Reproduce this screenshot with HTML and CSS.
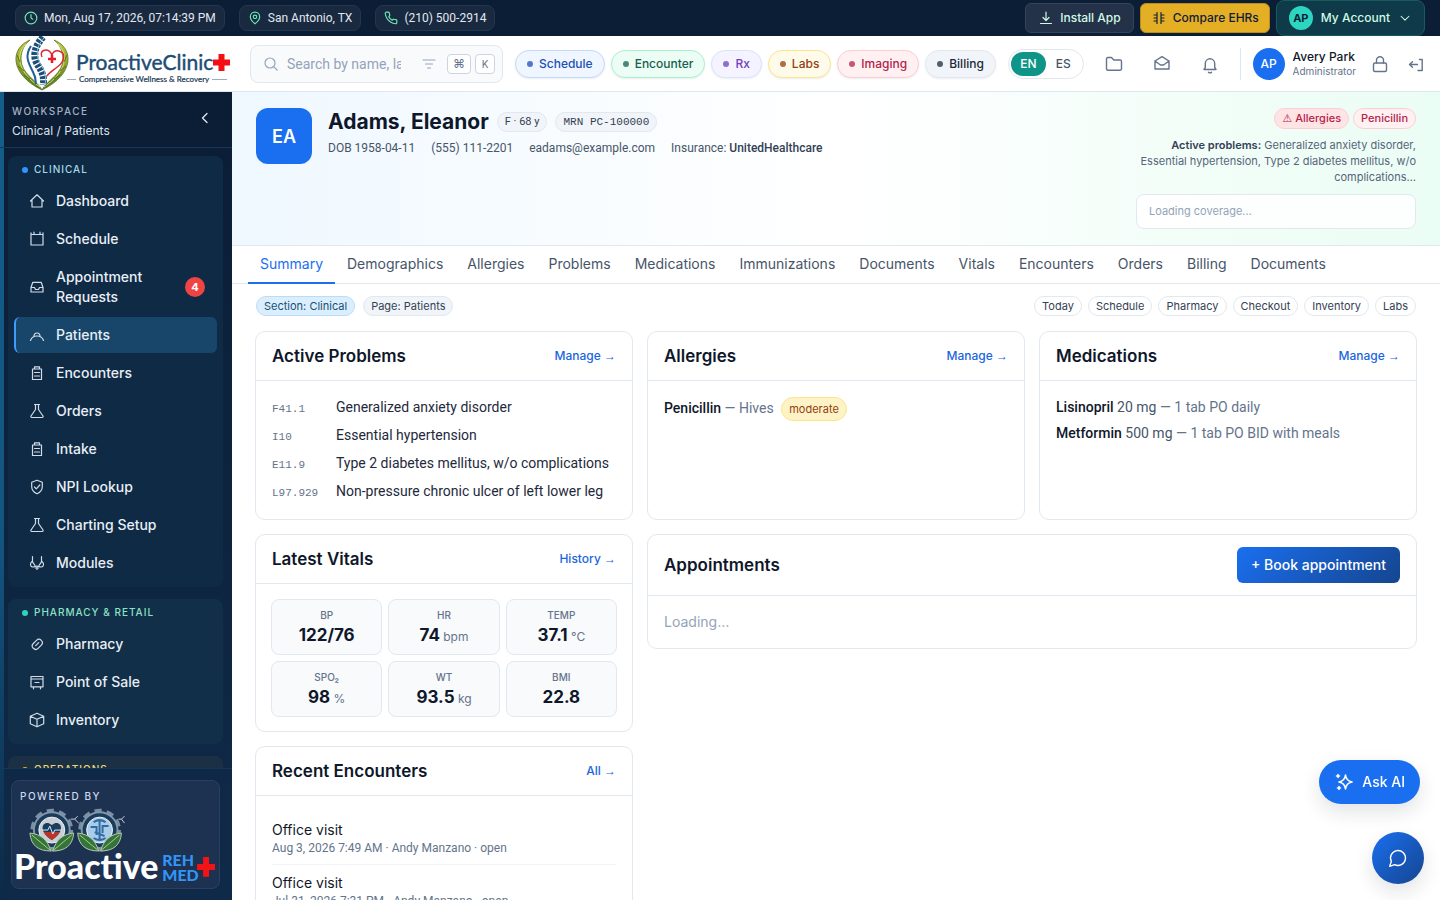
FILE: index.html
```html
<!DOCTYPE html>
<html lang="en">
<head>
    <meta charset="UTF-8">
    <meta name="viewport" content="width=device-width, initial-scale=1.0">
    <title>Adams, Eleanor - ProactiveClinic</title>
    <link rel="stylesheet" href="styles.css">
</head>
<body>
    <!-- Icon sprite -->
    <svg class="sprite" aria-hidden="true">
        <symbol id="i-clock" viewBox="0 0 24 24"><circle cx="12" cy="12" r="10"/><path d="M12 6v6l3 2"/></symbol>
        <symbol id="i-pin" viewBox="0 0 24 24"><path d="M20 10c0 6-8 12-8 12s-8-6-8-12a8 8 0 0 1 16 0z"/><circle cx="12" cy="10" r="3"/></symbol>
        <symbol id="i-phone" viewBox="0 0 24 24"><path d="M22 16.900v3a2 2 0 0 1-2.200 2 19.800 19.800 0 0 1-8.600-3.100 19.500 19.500 0 0 1-6-6A19.800 19.800 0 0 1 2.100 4.200 2 2 0 0 1 4.100 2h3a2 2 0 0 1 2 1.700c.1 1 .4 1.900.7 2.800a2 2 0 0 1-.5 2.100L8.100 9.900a16 16 0 0 0 6 6l1.300-1.300a2 2 0 0 1 2.100-.4c.9.300 1.800.6 2.800.7a2 2 0 0 1 1.700 2z"/></symbol>
        <symbol id="i-download" viewBox="0 0 16 16"><path d="M8 2v8M5 7.500l3 3 3-3M2.500 13.500h11"/></symbol>
        <symbol id="i-compare" viewBox="0 0 16 16"><path d="M6 2.500v11M10 2.500v11M3 5h3M3 8h3M3 11h3M10 5h3M10 8h3M10 11h3"/></symbol>
        <symbol id="i-chev-down" viewBox="0 0 16 16"><path d="M3.500 6l4.500 4.500L12.500 6"/></symbol>
        <symbol id="i-chev-left" viewBox="0 0 16 16"><path d="M10 3.500L5.500 8l4.500 4.500"/></symbol>
        <symbol id="i-search" viewBox="0 0 16 16"><circle cx="7" cy="7" r="5"/><path d="M10.700 10.700L14 14"/></symbol>
        <symbol id="i-filter" viewBox="0 0 16 16"><path d="M2 4h12M4.500 8h7M6.500 12h3"/></symbol>
        <symbol id="i-folder" viewBox="0 0 20 20"><path d="M2.500 5A1.500 1.500 0 0 1 4 3.500h3.500l2.300 2.500H16A1.500 1.500 0 0 1 17.500 7.500v7.200a1.500 1.500 0 0 1-1.500 1.500H4a1.500 1.500 0 0 1-1.500-1.500z"/></symbol>
        <symbol id="i-mail" viewBox="0 0 20 20"><path d="M3 7l7-4.300L17 7v8H3zM3 7l5.500 4h3L17 7"/></symbol>
        <symbol id="i-bell" viewBox="0 0 20 20"><path d="M4 15.500l1.300-2V9.500a4.700 4.700 0 0 1 9.400 0v4l1.300 2zM8.500 18.200c.8.700 2.200.7 3 0"/></symbol>
        <symbol id="i-lock" viewBox="0 0 20 20"><rect x="3.500" y="9" width="13" height="8.500" rx="1.500"/><path d="M6.500 9V6.200a3.500 3.500 0 0 1 7 0V9"/></symbol>
        <symbol id="i-exit" viewBox="0 0 20 20"><path d="M13.500 5.500h2.700v11H12M11.500 10.500H3.500M6.500 7.700l-3 2.800 3 2.800"/></symbol>
        <symbol id="i-home" viewBox="0 0 16 16"><path d="M1.500 8L8 1.800 14.500 8M3 6.800V14h10V6.800"/></symbol>
        <symbol id="i-calendar" viewBox="0 0 16 16"><path d="M2 3.500h12V14H2zM5 1v2.500M11 1v2.500M2 1.800v2M14 1.800v2"/></symbol>
        <symbol id="i-inbox" viewBox="0 0 16 16"><path d="M2 8.500l1.800-5.200h8.400L14 8.500V13H2zM2 8.500h3.500l1 2h3l1-2H14"/></symbol>
        <symbol id="i-patient" viewBox="0 0 16 16"><path d="M1.500 13.500c1-3 3.300-4.500 6.500-4.500s5.500 1.500 6.500 4.500M4.800 9.800C5 7.500 6.200 6 8 6s3 1.500 3.200 3.800"/></symbol>
        <symbol id="i-clipboard" viewBox="0 0 16 16"><path d="M3.500 4h9v10.500h-9zM5.500 4V1.800h5V4M5.500 7.500h5M5.500 11h5"/></symbol>
        <symbol id="i-flask" viewBox="0 0 16 16"><path d="M5.500 1.500h5M6.500 1.500v5L2 13q-.5 1.300.8 1.500h10.400q1.300-.2.800-1.500L9.500 6.500v-5"/></symbol>
        <symbol id="i-shield" viewBox="0 0 16 16"><path d="M8 1.200l5.300 2v4.300c0 3.500-2.200 5.900-5.300 7.300-3.100-1.400-5.300-3.800-5.300-7.300V3.200zM5.500 8l1.800 1.800L10.800 6"/></symbol>
        <symbol id="i-steth" viewBox="0 0 16 16"><path d="M3.500 1.500v5.300L6 10.500M12.500 1.500v5.300L10 10.500"/><path d="M3 6.500C.8 8 .9 11.800 3.800 12c2 .1 2.700-1 4.200-1s2.200 1.100 4.200 1c2.900-.2 3-4 .8-5.500M8 11v3.500M6.500 13h3"/></symbol>
        <symbol id="i-pill" viewBox="0 0 16 16"><path d="M4.300 7.500l3.200-3.200a3.300 3.300 0 0 1 4.800 4.800l-3.200 3.200a3.300 3.300 0 0 1-4.800-4.800zM6.700 9.700l3-3"/></symbol>
        <symbol id="i-pos" viewBox="0 0 16 16"><path d="M2 2.500h12v10.300H2zM2 5h12M6 8.500h4M4.500 12.800v2M11.500 12.800v2"/></symbol>
        <symbol id="i-box" viewBox="0 0 16 16"><path d="M8 1.200l6.700 3v7.600L8 14.800l-6.700-3V4.200zM1.300 4.200L8 7.300l6.700-3.100M8 7.300v7.500"/></symbol>
        <symbol id="i-spark" viewBox="0 0 20 20"><path d="M11.500 3c.5 4.200 2.400 6.200 6.500 7-4.100.8-6 2.800-6.500 7-.5-4.200-2.400-6.200-6.500-7 4.100-.8 6-2.800 6.500-7zM4 2.500v3M2.500 4h3M5 14.500v3M3.500 16h3"/></symbol>
        <symbol id="i-chat" viewBox="0 0 24 24"><path d="M7.900 20A9 9 0 1 0 4 16.100L2 22z"/></symbol>
    </svg>

    <div class="topbar">
        <div class="top-info">
            <span class="top-chip"><svg class="icon"><use href="#i-clock"/></svg>Mon, Aug 17, 2026, 07:14:39 PM</span>
            <span class="top-chip"><svg class="icon"><use href="#i-pin"/></svg>San Antonio, TX</span>
            <a class="top-chip" href="tel:2105002914"><svg class="icon"><use href="#i-phone"/></svg>(210) 500-2914</a>
        </div>
        <div class="top-actions">
            <button type="button" class="top-btn"><svg class="icon"><use href="#i-download"/></svg>Install App</button>
            <a href="#compare" class="top-btn gold"><svg class="icon"><use href="#i-compare"/></svg>Compare EHRs</a>
            <button type="button" class="top-btn account"><span class="mini-avatar">AP</span>My Account<svg class="icon chev"><use href="#i-chev-down"/></svg></button>
        </div>
    </div>

    <header class="header">
        <a class="brand" href="#home">
            <svg class="brand-logo" viewBox="0 0 232 55" role="img" aria-label="ProactiveClinic+ Comprehensive Wellness &amp; Recovery">
                <defs>
                    <linearGradient id="leaf" x1="0" y1="0" x2="0" y2="1">
                        <stop offset="0" stop-color="#c3cc3a"/>
                        <stop offset="0.5" stop-color="#8fa32a"/>
                        <stop offset="1" stop-color="#4c7420"/>
                    </linearGradient>
                </defs>
                <!-- laurel leaves -->
                <path d="M30 4C10 12 9 38 42 54 37 44 21 38 21 23 21 14 25 8 30 4z" fill="url(#leaf)" stroke="#5b7322" stroke-width="0.800"/>
                <path d="M54 4C74 12 75 38 42 54 47 44 63 38 63 23 63 14 59 8 54 4z" fill="url(#leaf)" stroke="#5b7322" stroke-width="0.800"/>
                <path d="M26 8C14 20 19 37 40 51M58 8C70 20 65 37 44 51" fill="none" stroke="#e6ec8c" stroke-width="0.800"/>
                <path d="M17 19l3 7M18 30l6 5M24 39l6 4M67 19l-3 7M66 30l-6 5M60 39l-6 4" fill="none" stroke="#46641b" stroke-width="0.800"/>
                <!-- spine -->
                <path d="M31 10C24 20 29 28 33 36s2 9 3 12" fill="none" stroke="#1d5f9a" stroke-width="2"/>
                <path d="M43 1C37 8 34 14 35 22s11 14 8 27" fill="none" stroke="#1d4e76" stroke-width="7" stroke-dasharray="3 1.300"/>
                <path d="M44 2C38 9 36 15 38 22s10 14 7 27" fill="none" stroke="#8ac0d9"/>
                <!-- heart with cross -->
                <path d="M42 21c-2-4 0-7 4-7s5 3 6 5c1-3 3-5 7-4 7 2 6 11-3 17-4 3-7 5-9 8" fill="none" stroke="#df2634" stroke-width="1.500"/>
                <path d="M52 19v8M48 23h8" stroke="#e51e2b" stroke-width="2.500"/>
                <text class="brand-name" x="76" y="34">ProactiveClinic</text>
                <path d="M218.500 18h6v5.500h5.500v6h-5.500V35h-6v-5.500H213v-6h5.500z" fill="#f40f12"/>
                <path d="M67 43.500h9M212 43.500h15" stroke="#9badb8"/>
                <text class="brand-tag" x="79" y="46">Comprehensive Wellness &amp; Recovery</text>
            </svg>
        </a>
        <div class="search">
            <svg class="icon"><use href="#i-search"/></svg>
            <input type="text" aria-label="Search patients" placeholder="Search by name, last name, DOB, MRN">
            <svg class="icon"><use href="#i-filter"/></svg>
            <kbd>⌘</kbd><kbd>K</kbd>
        </div>
        <nav class="quick">
            <a href="#schedule" class="q-blue">Schedule</a>
            <a href="#encounter" class="q-green">Encounter</a>
            <a href="#rx" class="q-violet">Rx</a>
            <a href="#labs" class="q-amber">Labs</a>
            <a href="#imaging" class="q-rose">Imaging</a>
            <a href="#billing" class="q-slate">Billing</a>
        </nav>
        <div class="lang">
            <button type="button" class="on">EN</button>
            <button type="button">ES</button>
        </div>
        <div class="header-icons">
            <button type="button" aria-label="Files"><svg class="icon"><use href="#i-folder"/></svg></button>
            <button type="button" aria-label="Messages"><svg class="icon"><use href="#i-mail"/></svg></button>
            <button type="button" aria-label="Notifications"><svg class="icon"><use href="#i-bell"/></svg></button>
        </div>
        <div class="user">
            <span class="user-avatar">AP</span>
            <span class="user-text"><strong>Avery Park</strong><small>Administrator</small></span>
        </div>
        <div class="session">
            <button type="button" aria-label="Lock"><svg class="icon"><use href="#i-lock"/></svg></button>
            <button type="button" aria-label="Sign out"><svg class="icon"><use href="#i-exit"/></svg></button>
        </div>
    </header>

    <div class="shell">
        <aside class="sidebar">
            <div class="workspace">
                <div>
                    <div class="workspace-label">WORKSPACE</div>
                    <div class="workspace-path">Clinical / Patients</div>
                </div>
                <button type="button" aria-label="Collapse sidebar"><svg class="icon"><use href="#i-chev-left"/></svg></button>
            </div>
            <nav class="nav">
                <section class="nav-group clinical">
                    <h2>CLINICAL</h2>
                    <a href="#dashboard"><svg class="icon"><use href="#i-home"/></svg><span>Dashboard</span></a>
                    <a href="#schedule"><svg class="icon"><use href="#i-calendar"/></svg><span>Schedule</span></a>
                    <a href="#requests"><svg class="icon"><use href="#i-inbox"/></svg><span>Appointment Requests</span><b class="count">4</b></a>
                    <a href="#patients" class="active"><svg class="icon"><use href="#i-patient"/></svg><span>Patients</span></a>
                    <a href="#encounters"><svg class="icon"><use href="#i-clipboard"/></svg><span>Encounters</span></a>
                    <a href="#orders"><svg class="icon"><use href="#i-flask"/></svg><span>Orders</span></a>
                    <a href="#intake"><svg class="icon"><use href="#i-clipboard"/></svg><span>Intake</span></a>
                    <a href="#npi"><svg class="icon"><use href="#i-shield"/></svg><span>NPI Lookup</span></a>
                    <a href="#charting"><svg class="icon"><use href="#i-flask"/></svg><span>Charting Setup</span></a>
                    <a href="#modules"><svg class="icon"><use href="#i-steth"/></svg><span>Modules</span></a>
                </section>
                <section class="nav-group pharmacy">
                    <h2>PHARMACY &amp; RETAIL</h2>
                    <a href="#pharmacy"><svg class="icon"><use href="#i-pill"/></svg><span>Pharmacy</span></a>
                    <a href="#pos"><svg class="icon"><use href="#i-pos"/></svg><span>Point of Sale</span></a>
                    <a href="#inventory"><svg class="icon"><use href="#i-box"/></svg><span>Inventory</span></a>
                </section>
                <section class="nav-group operations">
                    <h2>OPERATIONS</h2>
                </section>
            </nav>
            <div class="powered">
                <div class="powered-box">
                    <div class="powered-label">POWERED BY</div>
                    <svg class="powered-logo" viewBox="0 0 208 79" role="img" aria-label="Proactive REH MED+">
                        <g fill="none">
                            <circle cx="40" cy="24" r="19" stroke="#7b8fa0" stroke-width="5" stroke-dasharray="7 5"/>
                            <circle cx="40" cy="24" r="18" fill="#1b3b5b" stroke="#7f97aa" stroke-width="2"/>
                            <circle cx="40" cy="24" r="13" fill="#c8ced3" stroke="#eef3f6"/>
                            <circle cx="88" cy="24" r="19" stroke="#7b8fa0" stroke-width="5" stroke-dasharray="7 5"/>
                            <circle cx="88" cy="24" r="18" fill="#1b3b5b" stroke="#7f97aa" stroke-width="2"/>
                            <circle cx="88" cy="24" r="13" fill="#a9cce8" stroke="#eef3f6"/>
                            <path d="M59 13h4l3-3M63 13l4 4M107 13h3l3-3M110 13l3 4" stroke="#c5d0d8"/>
                        </g>
                        <path d="M40 34C24 24 32 12 40 19c8-7 16 5 0 15z" fill="#183f5f"/>
                        <path d="M32 26h16c-2 4-5 6-8 8-3-2-6-4-8-8z" fill="#b8352b"/>
                        <path d="M30 24h6l2-4 3 8 2-4h7" fill="none" stroke="#dbe9f0"/>
                        <path d="M88 14v20M82 16q6-4 12 0M82 32q6 4 12 0M79 21h6v8M97 20h-6v7M83 26l10 4" fill="none" stroke="#316da4" stroke-width="2"/>
                        <path d="M18 27c11 1 18 7 21 18-12 0-20-5-21-18zM62 27c-11 1-18 7-21 18 12 0 20-5 21-18zM66 27c11 1 18 7 21 18-12 0-20-5-21-18zM110 27c-11 1-18 7-21 18 12 0 20-5 21-18z" fill="#34743c" stroke="#b8c8b5"/>
                        <path d="M20 29l18 15M60 29L42 44M68 29l18 15M108 29L90 44" stroke="#a8cf72"/>
                        <text class="pw-main" x="2" y="73">Proactive</text>
                        <text class="pw-side" x="151" y="60">REH</text>
                        <text class="pw-side" x="151" y="75">MED</text>
                        <path d="M192 51h6v7h6v6h-6v7h-6v-7h-6v-6h6z" fill="#f21316"/>
                    </svg>
                </div>
            </div>
        </aside>

        <main class="main">
            <section class="patient">
                <div class="patient-avatar">EA</div>
                <div class="patient-info">
                    <div class="patient-title">
                        <h1>Adams, Eleanor</h1>
                        <span class="tag">F · 68 y</span>
                        <span class="tag mono">MRN PC-100000</span>
                    </div>
                    <div class="patient-meta">
                        <span>DOB 1958-04-11</span>
                        <span>(555) 111-2201</span>
                        <span>eadams@example.com</span>
                        <span>Insurance: <b>UnitedHealthcare</b></span>
                    </div>
                </div>
                <div class="patient-side">
                    <div class="alerts"><span class="alert strong"><span class="warn">⚠</span> Allergies</span><span class="alert">Penicillin</span></div>
                    <p><b>Active problems:</b> Generalized anxiety disorder, Essential hypertension, Type 2 diabetes mellitus, w/o complications…</p>
                    <div class="coverage">Loading coverage…</div>
                </div>
            </section>

            <nav class="tabs">
                <a href="#summary" class="active">Summary</a>
                <a href="#demographics">Demographics</a>
                <a href="#allergies">Allergies</a>
                <a href="#problems">Problems</a>
                <a href="#medications">Medications</a>
                <a href="#immunizations">Immunizations</a>
                <a href="#documents">Documents</a>
                <a href="#vitals">Vitals</a>
                <a href="#encounters">Encounters</a>
                <a href="#orders">Orders</a>
                <a href="#billing">Billing</a>
                <a href="#documents2">Documents</a>
            </nav>

            <div class="context">
                <span class="ctx section">Section: Clinical</span>
                <span class="ctx">Page: Patients</span>
                <div class="shortcuts">
                    <a href="#today">Today</a>
                    <a href="#schedule">Schedule</a>
                    <a href="#pharmacy">Pharmacy</a>
                    <a href="#checkout">Checkout</a>
                    <a href="#inventory">Inventory</a>
                    <a href="#labs">Labs</a>
                </div>
            </div>

            <div class="grid">
                <section class="card">
                    <div class="card-head"><h2>Active Problems</h2><a href="#problems">Manage <span class="arrow">→</span></a></div>
                    <ul class="problems">
                        <li><code>F41.1</code><span>Generalized anxiety disorder</span></li>
                        <li><code>I10</code><span>Essential hypertension</span></li>
                        <li><code>E11.9</code><span>Type 2 diabetes mellitus, w/o complications</span></li>
                        <li><code>L97.929</code><span>Non-pressure chronic ulcer of left lower leg</span></li>
                    </ul>
                </section>
                <section class="card">
                    <div class="card-head"><h2>Allergies</h2><a href="#allergies">Manage <span class="arrow">→</span></a></div>
                    <ul class="lines">
                        <li><b>Penicillin</b> <span>— Hives</span> <em class="severity">moderate</em></li>
                    </ul>
                </section>
                <section class="card">
                    <div class="card-head"><h2>Medications</h2><a href="#medications">Manage <span class="arrow">→</span></a></div>
                    <ul class="lines">
                        <li><b>Lisinopril</b> <i>20 mg</i> <span>— 1 tab PO daily</span></li>
                        <li><b>Metformin</b> <i>500 mg</i> <span>— 1 tab PO BID with meals</span></li>
                    </ul>
                </section>
                <section class="card">
                    <div class="card-head"><h2>Latest Vitals</h2><a href="#vitals">History <span class="arrow">→</span></a></div>
                    <div class="vitals">
                        <div class="vital"><small>BP</small><p><b>122/76</b></p></div>
                        <div class="vital"><small>HR</small><p><b>74</b> bpm</p></div>
                        <div class="vital"><small>TEMP</small><p><b>37.1</b> °C</p></div>
                        <div class="vital"><small>SPO₂</small><p><b>98</b> %</p></div>
                        <div class="vital"><small>WT</small><p><b>93.5</b> kg</p></div>
                        <div class="vital"><small>BMI</small><p><b>22.8</b></p></div>
                    </div>
                </section>
                <section class="card appointments">
                    <div class="card-head"><h2>Appointments</h2><button type="button" class="book">+ Book appointment</button></div>
                    <p class="loading">Loading…</p>
                </section>
                <section class="card">
                    <div class="card-head"><h2>Recent Encounters</h2><a href="#encounters">All <span class="arrow">→</span></a></div>
                    <ul class="encounters">
                        <li><b>Office visit</b><span>Aug 3, 2026 7:49 AM · Andy Manzano · open</span></li>
                        <li><b>Office visit</b><span>Jul 31, 2026 7:31 PM · Andy Manzano · open</span></li>
                    </ul>
                </section>
            </div>
        </main>
    </div>

    <div class="floating">
        <button type="button" class="ask"><svg class="icon"><use href="#i-spark"/></svg>Ask AI</button>
        <button type="button" class="chat" aria-label="Open chat"><svg class="icon"><use href="#i-chat"/></svg></button>
    </div>
</body>
</html>
```
FILE: styles.css
```css
* {
    box-sizing: border-box;
}
body {
    display: flex;
    flex-direction: column;
    height: 100vh;
    margin: 0;
    overflow: hidden;
    background: #fff;
    color: #0f172a;
    font-family: Inter, "Liberation Sans", sans-serif;
    font-size: 14px;
    line-height: 20px;
}
h1, h2, p, ul {
    margin: 0;
    padding: 0;
}
ul {
    list-style: none;
}
a {
    color: inherit;
    text-decoration: none;
}
button {
    margin: 0;
    padding: 0;
    border: 0;
    background: none;
    color: inherit;
    font: inherit;
    cursor: pointer;
}
.sprite {
    position: absolute;
    width: 0;
    height: 0;
}
.icon {
    flex: none;
    width: 16px;
    height: 16px;
    fill: none;
    stroke: currentColor;
    stroke-width: 1.2;
    stroke-linecap: round;
    stroke-linejoin: round;
}

/* Dense data text */
.top-chip,
.search input,
.tag,
.patient-meta,
.problems,
.lines,
.encounters {
    font-family: Roboto, "Liberation Sans", sans-serif;
}

/* Top bar */
.topbar {
    display: flex;
    flex: none;
    align-items: center;
    justify-content: space-between;
    height: 36px;
    padding: 0 15px;
    background: #0c1e36;
    color: #e2e8f0;
    font-size: 12px;
}
.top-info {
    display: flex;
    gap: 14px;
}
.top-chip {
    display: flex;
    align-items: center;
    gap: 6px;
    height: 26px;
    padding: 0 8px;
    border: 1px solid #24364d;
    border-radius: 8px;
    background: #182940;
}
.top-chip .icon {
    width: 14px;
    height: 14px;
    color: #6ee7b7;
    stroke-width: 2;
}
.top-actions {
    display: flex;
    align-items: center;
    gap: 6px;
}
.top-btn {
    display: flex;
    align-items: center;
    gap: 6px;
    height: 30px;
    padding: 0 12px;
    border: 1px solid #35445a;
    border-radius: 6px;
    background: #233248;
    color: #d1fae5;
    font-weight: 500;
}
.top-btn.gold {
    padding: 0 10px;
    border-color: #b78d1e;
    background: #e4ae25;
    color: #0f2037;
}
.top-btn.account {
    gap: 8px;
    height: 36px;
    border-color: #175b5c;
    border-radius: 8px;
    background: #0e3a4a;
}
.mini-avatar {
    width: 24px;
    border-radius: 50%;
    background: #2dd4bf;
    color: #0c1e36;
    font-size: 11px;
    font-weight: 700;
    line-height: 24px;
    text-align: center;
}
.chev {
    width: 14px;
    height: 14px;
}

/* Header */
.header {
    display: flex;
    flex: none;
    align-items: center;
    height: 56px;
    padding-right: 16px;
    border-bottom: 1px solid #dbe7f3;
    background: #fff;
}
.brand {
    flex: none;
    width: 232px;
    height: 55px;
    margin-right: 18px;
}
.brand-logo {
    display: block;
    width: 232px;
    height: 55px;
}
.brand-name {
    fill: #1c4c74;
    stroke: #1c4c74;
    stroke-width: 0.4;
    font-family: Lato, sans-serif;
    font-size: 21px;
}
.brand-tag {
    fill: #183955;
    stroke: #183955;
    stroke-width: 0.2;
    font-family: Lato, sans-serif;
    font-size: 8px;
}
.search {
    display: flex;
    flex: none;
    align-items: center;
    gap: 8px;
    width: 253px;
    height: 38px;
    padding: 0 7px 0 12px;
    border: 1px solid #e2e8f0;
    border-radius: 8px;
    background: #f8fafc;
    color: #94a3b8;
}
.search input {
    flex: 1;
    min-width: 0;
    margin-right: 12px;
    padding: 0;
    border: 0;
    outline: 0;
    background: none;
    font-size: 14px;
}
.search input::placeholder {
    color: #94a3b8;
}
.search kbd {
    width: 20px;
    padding: 0;
    border: 1px solid #cbd5e1;
    border-radius: 4px;
    background: #fff;
    color: #64748b;
    font-family: Inter, sans-serif;
    font-size: 10px;
    line-height: 18px;
    text-align: center;
}
.search kbd:first-of-type {
    width: 24px;
    margin-left: 2px;
    font-size: 12px;
}
.search kbd + kbd {
    margin-left: -4px;
}
.quick {
    display: flex;
    gap: 6px;
    margin-left: 12px;
}
.quick a {
    display: flex;
    align-items: center;
    gap: 6px;
    height: 28px;
    padding: 0 11px;
    border: 1px solid;
    border-radius: 14px;
    box-shadow: 0 1px 2px rgba(15, 23, 42, 0.08);
    font-size: 12px;
    font-weight: 500;
}
.quick a::before {
    content: "";
    width: 6px;
    height: 6px;
    border-radius: 50%;
    background: currentColor;
    opacity: 0.75;
}
.quick .q-blue { border-color: #bfdbfe; background: #eff6ff; color: #1d4fb5; }
.quick .q-green { border-color: #a7f3d0; background: #ecfdf5; color: #17604d; }
.quick .q-violet { border-color: #dbe4fd; background: #f5f3ff; color: #7040bf; }
.quick .q-amber { border-color: #fde68a; background: #fffbeb; color: #92400e; }
.quick .q-rose { border-color: #fecdd3; background: #fff1f2; color: #b4234a; }
.quick .q-slate { border-color: #e2e8f0; background: #f1f5f9; color: #1e293b; }
.lang {
    display: flex;
    flex: none;
    margin-left: 12px;
    padding: 2px;
    border: 1px solid #e2e8f0;
    border-radius: 15px;
    color: #475569;
    font-size: 12px;
    font-weight: 500;
}
.lang button {
    width: 35px;
    height: 24px;
    border-radius: 12px;
}
.lang .on {
    background: #0f9488;
    color: #fff;
}
.header-icons {
    display: flex;
    flex: 1;
    justify-content: space-around;
    margin: 0 6px;
    color: #64748b;
}
.header-icons .icon,
.session .icon {
    display: block;
    width: 20px;
    height: 20px;
    stroke-width: 1.4;
}
.user {
    display: flex;
    flex: none;
    align-items: center;
    gap: 8px;
    height: 32px;
    padding-left: 12px;
    border-left: 1px solid #dbe7f3;
}
.user-avatar {
    width: 32px;
    border-radius: 50%;
    background: #1a6ff0;
    color: #fff;
    font-size: 12px;
    font-weight: 500;
    line-height: 32px;
    text-align: center;
}
.user-text strong,
.user-text small {
    display: block;
    font-size: 12px;
    font-weight: 500;
    line-height: 15px;
}
.user-text small {
    color: #64748b;
    font-size: 10px;
    font-weight: 400;
    line-height: 14px;
}
.session {
    display: flex;
    gap: 16px;
    margin-left: 14px;
    margin-right: -2px;
    color: #64748b;
}

/* Sidebar */
.shell {
    display: flex;
    flex: 1;
    min-height: 0;
}
.sidebar {
    display: flex;
    flex: none;
    flex-direction: column;
    width: 232px;
    background: linear-gradient(#155e8a, #135581 55%, #0c2a47) left / 4px 100% no-repeat, linear-gradient(#0b1d35, #0f2a48);
    color: #e8eef5;
}
.workspace {
    display: flex;
    flex: none;
    align-items: center;
    justify-content: space-between;
    height: 56px;
    padding: 2px 19px 0 12px;
    border-bottom: 1px solid #12385a;
}
.workspace-label {
    color: #a4b1c0;
    font-size: 10px;
    font-weight: 500;
    letter-spacing: 1.5px;
}
.workspace-path {
    color: #dbe3ec;
    font-size: 12px;
}
.nav {
    flex: 1;
    min-height: 0;
    padding: 8px 9px 0 8px;
    overflow: hidden;
}
.nav-group {
    display: flex;
    flex-direction: column;
    gap: 2px;
    margin-bottom: 12px;
    padding: 6px;
    border-radius: 8px;
}
.nav-group h2 {
    display: flex;
    align-items: center;
    gap: 6px;
    margin-bottom: 4px;
    padding-left: 8px;
    font-size: 10px;
    font-weight: 500;
    letter-spacing: 1px;
    line-height: 15px;
}
.nav-group h2::before {
    content: "";
    width: 6px;
    height: 6px;
    border-radius: 50%;
    background: #3294ff;
}
.clinical { background: #0f2a45; }
.clinical h2 { color: #a5d8e6; }
.pharmacy { background: #112f48; }
.pharmacy h2 { color: #8de0c6; }
.nav .pharmacy h2::before { background: #2dd4bf; }
.operations { background: #1b3044; }
.operations h2 { color: #ead77b; }
.nav .operations h2::before { background: #eab308; }
.nav-group a {
    display: flex;
    align-items: center;
    gap: 11px;
    padding: 8px 12px 8px 13px;
    border-left: 2px solid transparent;
    border-radius: 6px;
    font-weight: 500;
}
.nav-group a span {
    flex: 1;
}
.nav-group a .icon {
    color: #d3dce6;
}
.nav-group a.active {
    border-left-color: #3b9dff;
    background: #17466a;
}
.count {
    width: 20px;
    border-radius: 50%;
    background: #ef4444;
    color: #fff;
    font-size: 11px;
    line-height: 20px;
    text-align: center;
}
.powered {
    flex: none;
    padding: 11px 12px 11px 11px;
    border-top: 1px solid #12385a;
}
.powered-box {
    padding: 5px 0 3px;
    border: 1px solid #2a4060;
    border-radius: 8px;
    background: #1d3150;
}
.powered-label {
    padding-left: 8px;
    color: #cbd9ec;
    font-size: 10px;
    font-weight: 500;
    letter-spacing: 1.5px;
}
.powered-logo {
    display: block;
    width: 100%;
    height: 79px;
}
.pw-main {
    fill: #fff;
    font-family: Lato, sans-serif;
    font-size: 34px;
    font-weight: 900;
}
.pw-side {
    fill: #3295f6;
    font-family: Lato, sans-serif;
    font-size: 16px;
    font-weight: 900;
}

/* Patient banner */
.main {
    flex: 1;
    min-width: 0;
    overflow: hidden;
}
.patient {
    display: flex;
    gap: 16px;
    padding: 16px 24px;
    border-bottom: 1px solid #e2e8f0;
    background: linear-gradient(90deg, #eff8ff, #fff 50%, #eafdf4);
}
.patient-avatar {
    flex: none;
    width: 56px;
    height: 56px;
    border-radius: 12px;
    background: #1a6ff0;
    color: #fff;
    font-size: 18px;
    font-weight: 600;
    line-height: 58px;
    text-align: center;
}
.patient-info {
    flex: 1;
}
.patient-title {
    display: flex;
    align-items: center;
    gap: 8px;
    height: 28px;
}
.patient-title h1 {
    font-size: 21px;
    font-weight: 700;
}
.tag {
    padding: 0 7px;
    border: 1px solid #e2e8f0;
    border-radius: 10px;
    background: #f1f5f9;
    color: #334155;
    font-size: 11px;
    line-height: 18px;
}
.mono {
    font-family: "Liberation Mono", monospace;
}
.patient-meta {
    display: flex;
    gap: 16px;
    margin-top: 2px;
    color: #475569;
    font-size: 12px;
}
.patient-meta b {
    color: #334155;
    font-weight: 500;
}
.patient-side {
    width: 280px;
}
.alerts {
    display: flex;
    justify-content: flex-end;
    gap: 4px;
}
.alert {
    padding: 0 7px;
    border: 1px solid #fecdd3;
    border-radius: 11px;
    background: #fff1f2;
    color: #b4234a;
    font-size: 11px;
    font-weight: 500;
    line-height: 19px;
}
.alert.strong {
    background: #ffe4e6;
}
.warn {
    font-family: "DejaVu Sans", sans-serif;
    font-weight: 400;
}
.patient-side p {
    margin-top: 8px;
    color: #56657a;
    font-size: 11px;
    line-height: 16px;
    text-align: right;
}
.patient-side p b {
    color: #334155;
    font-weight: 600;
}
.coverage {
    margin-top: 9px;
    padding: 8px 12px;
    border: 1px solid #e2e8f0;
    border-radius: 8px;
    background: rgba(255, 255, 255, 0.85);
    color: #94a3b8;
    font-size: 11px;
    line-height: 17px;
}

/* Tabs and page context */
.tabs {
    display: flex;
    padding: 0 16px;
    border-bottom: 1px solid #e2e8f0;
    color: #475569;
}
.tabs a {
    margin-bottom: -1px;
    padding: 8px 12px;
    border-bottom: 2px solid transparent;
}
.tabs .active {
    border-color: #1a6ff0;
    color: #1a6ff0;
}
.context {
    display: flex;
    align-items: center;
    gap: 8px;
    padding: 12px 24px 15px;
}
.ctx,
.shortcuts a {
    padding: 0 7px;
    border: 1px solid #e2e8f0;
    border-radius: 10px;
    color: #334155;
    font-size: 11px;
    line-height: 18px;
}
.ctx {
    background: #f1f5f9;
}
.ctx.section {
    border-color: #b9dcfb;
    background: #dbeefe;
    color: #155174;
}
.shortcuts {
    display: flex;
    gap: 6px;
    margin-left: auto;
}

/* Cards */
.grid {
    display: grid;
    grid-template-columns: repeat(3, minmax(0, 1fr));
    gap: 14px;
    padding: 0 23px;
}
.card {
    border: 1px solid #e2e8f0;
    border-radius: 10px;
    background: #fff;
}
.card-head {
    display: flex;
    align-items: center;
    justify-content: space-between;
    padding: 12px 16px;
    border-bottom: 1px solid #e2e8f0;
}
.card-head h2 {
    font-size: 17px;
    font-weight: 600;
    line-height: 24px;
}
.card-head a {
    color: #1a66e0;
    font-size: 12px;
    font-weight: 500;
}
.arrow {
    font-family: "Liberation Sans", sans-serif;
    font-weight: 400;
}
.problems {
    padding: 12px 16px 14px;
}
.problems li {
    display: flex;
    align-items: baseline;
    height: 28px;
    padding: 4px 0;
    color: #1e293b;
    white-space: nowrap;
}
.problems code {
    flex: none;
    width: 64px;
    color: #64748b;
    font-family: "Liberation Mono", monospace;
    font-size: 11px;
}
.lines {
    padding: 16px;
    color: #64748b;
}
.lines li {
    margin-bottom: 6px;
}
.lines b {
    color: #0f172a;
    font-weight: 500;
}
.lines i {
    color: #475569;
    font-style: normal;
}
.severity {
    display: inline-block;
    margin-left: 4px;
    padding: 1px 7px;
    border: 1px solid #fde68a;
    border-radius: 12px;
    background: #fef3c7;
    color: #92400e;
    font-family: Inter, sans-serif;
    font-size: 11px;
    font-style: normal;
}
.vitals {
    display: grid;
    grid-template-columns: repeat(3, 1fr);
    gap: 6px;
    padding: 15px 15px 14px;
}
.vital {
    padding: 8px 4px 7px;
    border: 1px solid #e2e8f0;
    border-radius: 8px;
    background: #f8fafc;
    color: #64748b;
    font-size: 12px;
    text-align: center;
}
.vital small {
    display: block;
    font-size: 10px;
    font-weight: 500;
    line-height: 15px;
}
.vital p {
    height: 24px;
    line-height: 24px;
}
.vital b {
    color: #0f172a;
    font-size: 17px;
}
.appointments {
    grid-column: span 2;
    align-self: start;
}
.book {
    height: 36px;
    padding: 0 14px;
    border-radius: 6px;
    background: linear-gradient(135deg, #1a6ff0, #15458f);
    color: #fff;
    font-weight: 500;
}
.loading {
    padding: 16px;
    color: #94a3b8;
}
.encounters {
    padding: 16px;
}
.encounters li {
    padding: 8px 0;
    border-bottom: 1px solid #f1f5f9;
}
.encounters b,
.encounters span {
    display: block;
    font-family: Inter, sans-serif;
    font-weight: 400;
}
.encounters span {
    color: #64748b;
    font-family: inherit;
    font-size: 12px;
    line-height: 16px;
}

/* Floating buttons */
.floating {
    position: fixed;
    right: 16px;
    bottom: 16px;
    display: flex;
    flex-direction: column;
    align-items: flex-end;
    gap: 28px;
}
.floating button {
    display: flex;
    align-items: center;
    justify-content: center;
    color: #fff;
    box-shadow: 0 8px 20px rgba(15, 23, 42, 0.12);
}
.floating .ask {
    gap: 8px;
    height: 44px;
    margin-right: 4px;
    padding: 0 15px;
    border-radius: 22px;
    background: #1a6ff0;
    font-weight: 500;
}
.floating .icon {
    width: 20px;
    height: 20px;
    stroke-width: 1.6;
}
.chat {
    width: 52px;
    height: 52px;
    border-radius: 50%;
    background: linear-gradient(135deg, #1a6ff0, #15458f);
}
```
